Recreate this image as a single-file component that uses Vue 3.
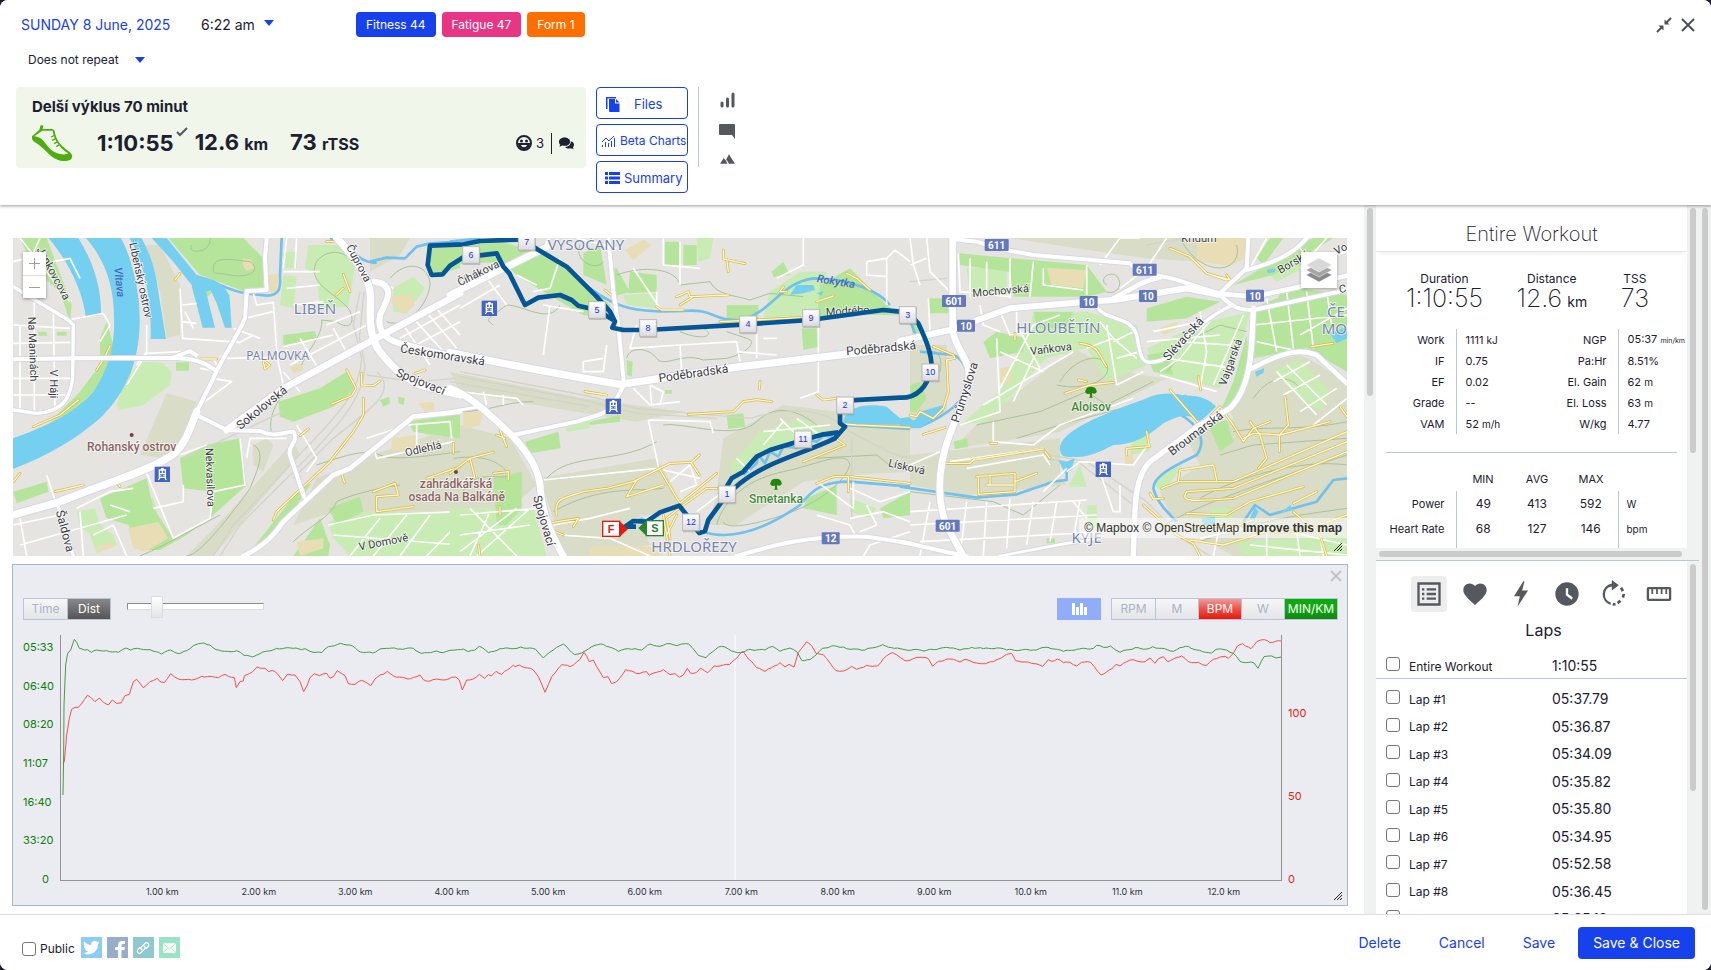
<script setup>
import { ref, computed } from 'vue'

const isPublic = ref(false)
const axis = ref('Dist')
const smoothing = ref(19)

const badges = [
  { text: 'Fitness 44', tone: 'blue' },
  { text: 'Fatigue 47', tone: 'pink' },
  { text: 'Form 1', tone: 'orange' },
]

const totals = [
  { label: 'Duration', value: '1:10:55', unit: '' },
  { label: 'Distance', value: '12.6', unit: 'km' },
  { label: 'TSS', value: '73', unit: '' },
]

const metrics = [
  ['Work', '1111', 'kJ', 'NGP', '05:37', 'min/km'],
  ['IF', '0.75', '', 'Pa:Hr', '8.51%', ''],
  ['EF', '0.02', '', 'El. Gain', '62', 'm'],
  ['Grade', '--', '', 'El. Loss', '63', 'm'],
  ['VAM', '52', 'm/h', 'W/kg', '4.77', ''],
]

const ranges = [
  ['Power', 49, 413, 592, 'W'],
  ['Heart Rate', 68, 127, 146, 'bpm'],
]

const laps = ref([
  { name: 'Entire Workout', time: '1:10:55', on: false },
  { name: 'Lap #1', time: '05:37.79', on: false },
  { name: 'Lap #2', time: '05:36.87', on: false },
  { name: 'Lap #3', time: '05:34.09', on: false },
  { name: 'Lap #4', time: '05:35.82', on: false },
  { name: 'Lap #5', time: '05:35.80', on: false },
  { name: 'Lap #6', time: '05:34.95', on: false },
  { name: 'Lap #7', time: '05:52.58', on: false },
  { name: 'Lap #8', time: '05:36.45', on: false },
  { name: 'Lap #9', time: '05:35.12', on: false },
])

const channels = [
  { text: 'RPM', tone: 'off' },
  { text: 'M', tone: 'off' },
  { text: 'BPM', tone: 'red' },
  { text: 'W', tone: 'off' },
  { text: 'MIN/KM', tone: 'green' },
]

const paceTicks = ['05:33', '06:40', '08:20', '11:07', '16:40', '33:20', '0']
const bpmTicks = ['100', '50', '0']
const kmTicks = ['1.00', '2.00', '3.00', '4.00', '5.00', '6.00', '7.00', '8.00', '9.00', '10.0', '11.0', '12.0']

// each trace is recorded in three chunks: x/y pairs with the chunk's own origin
const pace = [
  { dx: -183, dy: -240, p: '189,720 191,600 192,450 197,330 203,295 212,285 223,253 230,262 238,280 262,284 274,292 290,285 320,287 355,292 378,279 392,285 412,280 450,284 484,297 512,285 535,296 560,287 580,272 612,264 630,270 648,284 690,290 710,287 732,301 757,306 780,296 830,280 880,280 905,284 915,281 930,289 965,293 985,275 1022,265 1050,270 1082,291 1118,294 1135,285 1160,280 1200,282 1240,280 1265,295 1310,288 1330,293 1350,286' },
  { dx: 1167, dy: -195, p: '15,240 40,237 55,245 73,241 88,229 115,248 150,236 190,236 212,231 257,238 280,264 310,240 340,222 374,254 405,243 435,226 460,223 505,244 525,237 555,236 575,240 600,222 630,229 650,221 680,227 695,222 716,222 745,256 768,263 805,231 825,231 855,246 880,247 895,238 945,240 967,229 990,244 1020,234 1042,247 1055,271 1080,269 1117,235 1150,227 1180,231 1200,238 1245,240 1298,224 1325,233' },
  { dx: 2517, dy: -195, p: '0,236 15,239 80,241 120,235 150,234 180,240 215,232 250,236 290,234 320,240 400,240 444,232 490,244 530,238 580,235 590,226 610,232 632,228 660,247 705,233 740,237 758,230 820,244 840,233 865,229 890,240 935,249 948,238 980,240 1000,250 1020,274 1062,279 1074,295 1092,260 1115,258 1128,264 1143,261' },
]
const bpm = [
  { dx: -183, dy: -240, p: '189,625 193,620 200,540 208,490 215,463 225,457 235,457 262,421 270,425 285,440 298,429 315,445 325,450 337,435 350,445 363,444 375,422 388,418 400,380 410,373 430,398 440,390 450,380 472,370 480,380 493,383 512,356 535,372 555,374 575,375 605,364 655,368 675,358 695,367 703,368 709,398 720,380 730,378 733,362 748,356 758,350 771,336 795,340 806,350 817,346 833,357 848,377 863,357 885,360 900,380 911,410 921,392 930,368 943,356 958,362 980,355 990,370 1000,365 1012,347 1035,362 1045,386 1065,388 1085,376 1098,382 1112,392 1125,372 1140,360 1152,357 1162,349 1190,367 1232,371 1260,360 1270,374 1287,379 1310,372 1340,374' },
  { dx: 1167, dy: -195, p: '5,322 18,321 28,330 37,360 50,330 68,328 88,313 103,325 115,314 124,318 138,304 155,313 190,285 195,290 208,285 250,300 265,320 285,367 305,320 335,284 360,290 390,268 402,247 418,275 430,270 460,323 474,320 485,341 500,335 527,299 560,311 590,305 598,316 640,299 660,314 675,311 688,322 700,315 712,295 722,310 740,307 752,294 773,308 792,288 838,284 860,265 878,243 895,267 905,275 920,293 945,304 965,293 990,278 1005,291 1017,283 1032,291 1045,247 1055,235 1070,215 1085,227 1098,250 1120,254 1140,279 1158,302 1180,303 1205,289 1220,298 1250,286 1283,288 1300,266 1327,248' },
  { dx: 2517, dy: -195, p: '0,262 15,272 65,262 85,266 98,289 115,274 150,267 180,276 195,268 240,281 280,275 320,253 335,250 347,272 385,276 428,289 445,269 455,274 472,267 490,278 510,277 530,288 545,277 572,277 603,315 635,297 648,283 660,288 690,270 735,275 750,264 765,280 775,266 790,260 803,275 845,258 865,275 895,277 918,287 940,268 975,259 985,265 1000,250 1012,228 1028,221 1053,236 1070,215 1093,209 1110,218 1143,213' },
]

function trace(chunks) {
  const pts = chunks.flatMap(({ dx, dy, p }) =>
    p.split(' ').map((s) => s.split(',').map(Number)).map(([x, y]) => [x + dx, y + dy]))
  const out = []
  pts.forEach(([x, y], i) => {
    out.push(`${x},${y}`)
    const next = pts[i + 1]
    if (!next) return
    const steps = Math.floor((next[0] - x) / 8)
    for (let k = 1; k < steps; k++) {
      const t = k / steps
      const wobble = Math.sin((x + k * 8) * 1.7) * 2
      out.push(`${Math.round(x + (next[0] - x) * t)},${Math.round(y + (next[1] - y) * t + wobble)}`)
    }
  })
  return out.join(' ')
}

const paceLine = computed(() => trace(pace))
const bpmLine = computed(() => trace(bpm))

// map tiles, west to east
const tiles = [
  {
    dx: 0,
    olive: [
      'M420 690L500 505L590 530L560 640L500 700Z',
      'M880 900L950 760L1120 690L1380 600V860H1000Z',
      'M430 60L480 60L540 180V330L500 340L480 200Z',
      'M690 860L880 650L900 690L760 850L640 993H560Z',
      'M1110 39H1230L1200 90L1110 140Z',
      'M760 660L800 640L820 660L790 740L760 720Z',
    ],
    park: [
      'M505 39H730L790 100V190L735 200L600 150Z',
      'M300 820L440 760L460 850L520 940L630 880L640 800L550 790L540 700L620 660L720 640L740 780L640 870L560 930L480 975H430L385 900L320 880Z',
      'M740 993L900 790L935 775L870 870L800 960Z',
      'M835 530L960 490L1040 440L1065 490L1000 545L880 590L840 575Z',
      'M1280 60H1380V130L1290 152Z',
      'M1225 590L1380 565V640L1240 620Z',
      'M985 850L1080 815L1090 860L1010 900Z',
      'M140 39L60 39L100 130L180 200L210 290L215 240Z',
      'M320 290L340 360L335 420L280 500L220 560L150 590L240 500L300 420L300 340Z',
      'M850 330L945 318L950 340L850 365Z',
      'M528 412H567V437H528Z',
      'M275 39H300V50H275Z',
      'M40 800L140 770L145 800L50 835Z',
      'M115 320H140V332H115ZM170 320H200V332H170Z',
      'M880 993L960 880L990 960L985 993Z',
      'M1140 525L1168 515L1170 535L1150 545Z',
      'M1195 515L1215 520L1210 540L1195 535Z',
      'M575 185L610 190L620 170L690 210L680 240L640 200L590 240Z',
    ],
    light: [
      'M350 540L380 450L430 410L490 415L515 440L510 480L430 540L360 555Z',
      'M925 60H1030L1065 120L1045 245L960 250L950 150L915 130Z',
      'M1180 190L1240 155L1275 190L1220 265L1180 260Z',
      'M380 840L460 820L475 880L400 895Z',
      'M985 890L1100 860H1380V993H1050L1000 940Z',
      'M850 80H890V130H850ZM850 150L890 155L880 250L840 240Z',
      'M230 860L285 850L300 900L340 930L350 960L290 985L270 930L240 900Z',
      'M1270 600L1345 590L1350 625L1275 630Z',
      'M560 39H690L700 110L620 130Z',
      'M960 500L1060 480L1050 510L980 550Z',
    ],
    sand: [
      'M385 910L475 890L505 940L435 980L400 970Z',
      'M1175 640L1250 630V670L1175 678Z',
      'M1175 215L1230 205L1245 240L1210 268L1175 235Z',
      'M803 150L835 148L830 205L805 200Z',
      'M728 100L755 105L762 130L740 138L728 120Z',
      'M870 425L905 415L910 435L880 445Z',
      'M890 950L970 940L970 970L900 993Z',
      'M1255 535L1300 530L1305 555L1275 560Z',
      'M290 965L330 950L345 965L300 980Z',
    ],
    water: [
      'M258 39C310 100 340 170 342 270C345 340 335 420 280 500C220 570 120 610 39 640V732C150 690 230 640 300 580C370 510 410 430 418 320C425 220 400 110 363 39Z',
      'M145 39H235C280 110 305 190 303 270L257 275C250 200 200 100 145 39Z',
      'M388 39H425C450 90 462 120 470 170L498 342H452C455 250 440 120 388 39Z',
      'M455 39H500L590 150L640 165C670 180 690 200 690 230L695 308H675L650 235L632 195L618 200L645 308H608L575 180L520 110Z',
    ],
    stream: [
      'M590 155C650 170 690 200 740 205L800 212C840 210 842 190 840 150L845 39',
      'M1110 110L1160 98L1215 100L1250 65L1290 55L1380 50',
      'M990 39C1050 60 1080 120 1130 112',
    ],
    contour: [
      'M640 130C640 90 700 105 750 110C790 140 740 160 690 150S640 150 640 130',
      'M575 60C560 90 620 80 625 60C640 40 620 70 632 39',
      'M1065 120C1030 60 960 80 945 120C930 180 1000 200 1045 250C1070 290 1050 320 1010 290L965 285C970 330 920 380 905 420',
      'M760 660C800 680 770 740 750 790C700 860 600 993 560 993',
      'M1170 160C1220 100 1290 120 1290 180C1280 260 1200 310 1160 290',
      'M820 640C800 600 820 540 850 510',
      'M950 720C1040 690 1100 670 1140 690S1300 690 1380 680',
      'M880 950C930 900 990 880 1010 830C1050 810 1130 790 1200 780',
      'M420 993C500 960 600 900 660 870',
    ],
    minor: [
      'M39 300L210 310M39 355L218 352M60 300V560M103 200V560M160 260L165 560M39 460H218M39 510H215M60 39L210 230M39 110L120 90M120 39L80 130M160 110L210 100L240 160M205 285L310 265L330 300L300 350',
      'M540 190L548 340L720 352L760 330M548 240L590 235M545 290L590 295M555 260L580 310',
      'M700 310L780 340M760 205L770 240L820 232L832 400L850 480M735 280L820 260M860 39L850 130M890 39L885 130M850 140H960M860 190L960 180M880 240L970 230',
      'M640 460L695 470L600 540M600 430L660 440L640 400M440 300V380L410 420M380 480L440 385L580 378L590 400',
      'M680 400L830 396M700 350L660 400M850 365L1000 330M900 500L850 440M960 440L930 390L900 340M1000 310L1050 400M980 300L1080 260M870 420L1100 300',
      'M140 750L220 993M230 850L330 800L400 790M280 930L340 900L380 993M330 840L390 860M250 993L240 860M440 745L520 940L630 880L640 800L735 780L720 640M540 690L620 660M460 850L550 830L550 780',
      'M60 960L380 870M39 900L180 870M80 993L60 880',
      'M1180 190L1100 160M1210 300L1290 420M1240 280L1340 390M1270 250L1370 370M1300 240L1380 330M1200 340L1380 240M1230 370L1380 290',
      'M1100 640L1220 600L1350 590L1355 640M1130 700L1360 650M1130 700L1120 660M1250 600V690',
      'M985 900L1120 870L1380 860M1050 993L1140 880M1120 993L1220 870M1200 993L1290 870M1000 930L1380 960M1280 993L1380 890',
      'M890 600L950 700L920 740M740 700L750 640L860 640',
    ],
    rail: [
      'M1080 200L1060 300L1085 400C1080 520 980 600 870 720L700 900L640 993',
      'M1092 200L1078 340L1095 420C1095 520 1000 620 890 730L720 900L660 993',
      'M1130 440C1200 500 1100 560 1000 640L880 760',
      'M1100 450L1240 470L1380 460',
      'M550 700L850 560',
    ],
    road: [
      ['M39 403L220 400L520 398C580 400 610 410 645 435M520 398L570 378L588 390', 12],
      ['M800 39L795 100L800 195L740 198L735 280C710 340 660 410 640 460L590 560', 12],
      ['M590 560C570 610 550 680 500 700C440 740 300 780 180 830L39 870', 22],
      ['M590 570L680 615L780 618C830 640 850 620 880 620C900 650 860 660 870 690L912 815', 12],
      ['M680 615L850 490L1100 355L1380 205', 20],
      ['M1010 39C1050 80 1110 150 1112 220C1108 290 1110 340 1140 380C1180 430 1200 450 1260 480L1380 510', 22],
      ['M1125 170C1190 180 1160 230 1140 270C1130 320 1160 345 1200 355L1380 400', 18],
      ['M730 993C800 960 830 920 850 890L1000 750L1050 730L1240 575L1380 560', 14],
      ['M39 185L130 240L205 285L220 300L218 460C210 520 190 560 110 565L39 555', 10],
      ['M170 830L220 993', 10],
    ],
    trail: [
      'M100 605L180 570L235 525', 'M330 362L315 395L290 435', 'M600 402H650', 'M165 800L250 780',
      'M820 885L830 860L990 710L1060 620L1090 570V520', 'M1040 435L1068 490L1055 512L995 537',
      'M1085 445V480L1120 482L1140 468', 'M1030 148L1050 200M980 50H1005M1030 190L1008 210', 'M525 165L540 145M790 405L810 420L795 432L790 410',
      'M1120 800L1185 775L1195 810L1130 815L1130 860L1240 845', 'M1280 760L1380 725', 'M40 770L60 745M350 770L360 785',
      'M1025 745L1033 772M1245 445L1275 435', 'M900 632L925 612M1360 655V685',
    ],
    labels: [
      ['Vltava', 358, 172, 84, 'river'], ['Libeňský ostrov', 422, 165, 78, 's33'], ['Jankovcova', 160, 145, 62, 's33'],
      ['Na Maninách', 98, 372, 88, 's33'], ['V Háji', 160, 477, 90, 's33'], ['LIBEŇ', 945, 248, 0, 'district big'],
      ['PALMOVKA', 833, 392, 0, 'district'], ['Čuprova', 1076, 115, 62, 's33'], ['Sokolovská', 785, 548, -39, 's36'],
      ['Rohanský ostrov', 395, 665, 0, 'place'], ['Nekvasilova', 630, 757, 88, 's33'], ['Šaldova', 195, 918, 75, 's36'],
      ['Spojovací', 1262, 470, 22, 's36'], ['Českomoravská', 1328, 390, 9, 's36'], ['Odlehlá', 1270, 672, -13, 's33'],
      ['zahrádkářská', 1368, 777, 0, 'place'], ['osada Na Balkáně', 1370, 816, 0, 'place'], ['V Domově', 1150, 952, -11, 's33'],
    ],
    dots: [[395, 630], [1368, 741]],
    trains: [[487, 748]],
    trees: [],
    shields: [],
  },
  {
    dx: 1350,
    olive: [
      'M820 640L1000 540L1160 560L1380 600V740L1200 750L1060 770L860 900H780L800 800Z',
      'M270 760L620 700L700 840L600 870L310 880Z',
      'M30 600L180 640L260 780L180 850L30 850Z',
      'M310 880L560 850L600 960L420 993H330Z',
      'M0 440L400 520L700 560L560 590L200 530L30 500Z',
    ],
    park: [
      'M0 60L150 50L260 80L360 130L480 240V280L400 270L280 200L200 150L160 110L0 120Z',
      'M540 140L620 150V200L535 205Z', 'M645 50H690V120H645ZM700 60H740V120H700Z',
      'M830 240H925V290H830Z', 'M1055 310H1100L1105 365L1060 375Z',
      'M225 650L325 620L332 670L240 685Z', 'M130 760L215 740V850L170 900H140Z',
      'M830 570L880 565L885 605L835 612Z', 'M1070 820L1160 780V870L1060 850Z',
      'M420 590L510 570V590L420 600Z', 'M530 405L548 410L545 455L532 450Z',
      'M1110 180L1200 130L1310 240L1350 270L1200 270L1100 285Z', 'M645 495H665V506H645Z',
      'M480 130L500 130L540 200L490 215Z', 'M400 85L450 60L470 180L400 150Z', 'M965 140L1000 110L1020 150L970 155Z',
      'M1290 850L1380 800V870L1300 880Z',
    ],
    light: [
      'M840 720L930 620L1060 580L1140 620L940 690L850 770Z',
      'M0 850H250L290 993H0Z', 'M960 200L1050 140L1130 140L1100 280L940 280Z',
      'M340 590L420 580V610L350 620Z', 'M740 39H790L780 100L745 110Z', 'M520 210L620 205V250L530 240Z',
      'M1200 820L1280 850L1260 880L1200 860Z',
    ],
    sand: [
      'M525 75L580 45L605 60L550 105Z', 'M40 560L100 560L90 600L40 615Z', 'M420 965H600L640 993H420Z',
    ],
    water: [
      'M1180 590C1190 540 1260 535 1310 545L1350 580L1420 570L1410 600L1180 598Z',
      'M1020 210L1040 180L1090 180L1095 195L1060 205Z', 'M1100 205L1120 198L1115 212Z',
      'M560 885L575 876L588 885L580 895H562Z',
    ],
    stream: [
      'M420 190C500 250 560 265 700 258C800 250 780 290 880 285C960 260 1000 170 1090 160C1200 160 1290 200 1320 240',
      'M760 920C850 950 950 910 1050 840C1090 790 1120 770 1200 770L1380 785',
      'M880 750L920 715L925 690L945 715L960 680L985 695L1000 665L1040 668L1060 640L1100 650L1120 632L1150 635',
      'M1180 600L1380 612', 'M0 50L90 40',
    ],
    contour: [
      'M330 240C300 300 220 240 170 240C120 280 100 280 130 300', 'M500 150C580 120 680 130 690 180L780 170C800 210 850 210 900 225L960 205L1060 215',
      'M530 400C540 360 600 370 620 400S700 380 760 405L830 400C880 390 930 350 890 340L830 320',
      'M690 320C760 350 800 330 760 310', 'M800 900C820 820 900 760 1000 740S1190 670 1200 720C1170 800 1060 850 1000 870S830 920 820 890',
      'M1090 700L1280 690L1330 730', 'M640 600C700 590 860 650 920 590S1050 560 1100 600', 'M290 760C360 680 500 720 620 650',
      'M310 860C450 780 560 800 640 790', 'M10 700C80 690 140 700 170 740S60 720 40 800', 'M390 60C370 110 440 140 460 110',
      'M30 560C120 560 160 530 250 530',
    ],
    minor: [
      'M270 80L300 39M150 180L30 250M110 160L170 240M200 150L260 180M250 200L300 190L330 100M380 39L500 70M300 240L280 390M280 240L400 260',
      'M550 130L630 250M620 200V250M640 39V120L750 130M690 50V180M560 300L540 370L690 360L860 350M690 360L695 440M470 360L460 440L400 440V410L460 400',
      'M860 350L870 410M920 320V400M860 380L980 390M940 340H980M1105 300V500L1050 520M1250 110L1310 100L1335 75L1380 110M1250 110V150L1310 155M1310 100V240M1060 39V120L980 160',
      'M595 585L780 590L790 625M595 585L625 725L690 830M280 765L620 730M550 490L600 540L690 530M600 480L605 540M580 470L640 500L630 540',
      'M1380 800L1290 830L1200 790M1200 880L1300 860L1380 890M1250 840L1280 900L1230 920M1100 870L1200 900L1220 940',
      'M30 870L260 850M30 930L240 900M30 980L200 850M80 993L240 850M60 850L200 993M120 860L60 993',
      'M30 500L200 520L220 540M100 500L110 540M160 510V540',
      'M310 900L420 880L540 850M330 930L480 940L600 993M660 770L720 720L740 780L690 800M740 860L820 800',
      'M940 620L1140 600M990 580L1050 640M1040 580L1110 630M940 660L1000 590M860 700L900 740M1380 920L1260 960L1240 993',
      'M750 760L640 735M1100 770L1210 850V770',
    ],
    rail: [
      'M30 440L400 510L560 550L900 580C1000 550 1120 540 1200 620C1280 660 1320 690 1380 700',
      'M30 455L400 525L560 565L800 580', 'M1205 640V880', 'M0 470L420 545',
    ],
    road: [
      ['M0 210L290 66', 20],
      ['M0 383C180 420 340 450 510 478L870 425L1380 365', 22],
      ['M475 39L490 200L505 300L522 480L500 520C480 570 440 570 380 590L190 630', 12],
      ['M0 490C60 510 120 570 190 635C240 690 270 740 272 800C280 880 310 940 340 993', 20],
      ['M860 993C970 960 1080 930 1250 935L1380 955', 12],
      ['M0 560L90 545', 8],
    ],
    trail: [
      'M715 568L850 560L880 530L920 524L965 530', 'M930 470L928 492', 'M1100 510L1120 525L1160 520', 'M820 75V102L885 116M830 102L835 140',
      'M620 245L635 255H700M680 215L715 200L720 215L835 210M725 218L690 240', 'M1100 230L1150 213M1190 145L1220 160L1260 195',
      'M320 870C310 820 340 820 400 800L470 790L550 770L660 715L725 712M630 735L690 835L800 745M560 765L530 815L640 780M725 712L748 690M725 715L748 750',
      'M700 840L650 880L660 940M640 870L660 993M680 870L650 930', 'M1060 710L1185 660L1155 640M1100 775L1150 755H1195V800M1200 755L1380 775',
      'M1180 597L1220 600L1380 607', 'M0 745L60 700L130 682M60 700L75 760M130 745L175 740V765', 'M150 615L170 665M140 630L165 640',
      'M290 895L385 880L370 905M290 910L340 930', 'M405 500L470 510M465 195L485 212M1000 185L990 200H1010', 'M150 845V870M85 960L90 993M810 290L1050 278',
      'M700 840L770 790L800 790',
    ],
    labels: [
      ['VYSOČANY', 408, 56, 0, 'district big'], ['Čihákova', 85, 145, -26, 's33'], ['Poděbradská', 730, 445, -8, 's36'],
      ['Poděbradská', 1293, 370, -5, 's36'], ['Rokytka', 1158, 170, 9, 'river'], ['Modrého', 1193, 258, -3, 's33'],
      ['Spojovací', 282, 887, 74, 's36'], ['Smetanka', 978, 823, 0, 'nature'], ['HRDLOŘEZY', 732, 963, 0, 'district big'],
      ['Lísková', 1370, 726, 13, 's33'],
    ],
    dots: [],
    trains: [[118, 250], [490, 544]],
    trees: [[978, 776]],
    shields: [['12', 1142, 940]],
  },
  {
    dx: 2700,
    olive: [
      'M230 600L520 370L620 420L720 450L800 460L480 620L300 650L160 670Z',
      'M860 640L1050 560H1341V993H1000L820 890L780 800L900 720Z',
      'M30 690L120 680L480 640L480 760L500 780L200 810L30 780Z',
      'M330 39H900L890 110L740 100L600 80Z', 'M30 360H140V560L60 600L30 580Z', 'M1060 420L1200 390L1260 420L1341 480V600H1010L990 560Z',
    ],
    park: [
      'M175 85L560 120L620 200L560 215L340 215L330 140L180 120Z', 'M740 390L800 380L820 450L760 440Z',
      'M1000 470L1040 330L1050 430L1010 530L960 560Z', 'M1060 250L1200 190L1341 210V440L1220 370L1060 400Z',
      'M1000 180L1200 60L1240 39H1300L1120 150Z', 'M925 600L980 585L1000 650L960 680Z', 'M85 220H160V265H85Z',
      'M160 650L200 640L205 665L165 672Z', 'M30 480L60 470L80 520L50 560L30 560Z', 'M740 250L860 215L960 230L860 280L740 290Z',
      'M400 260H520L500 310H410Z', 'M1070 100L1110 39H1150L1090 120Z', 'M440 940H465V955H440Z', 'M1140 200L1180 190L1160 240H1130Z',
      'M30 270L50 290L60 330L40 340Z', 'M250 350L290 320L380 340L370 380L270 400Z',
    ],
    light: [
      'M300 500L400 270L560 260L710 300L740 420L620 470L560 370L440 400L260 590L180 600L250 540Z',
      'M740 370L920 290L1050 260L1030 340L960 490L780 450Z', 'M505 785L540 720L560 785Z', 'M560 840H590V890L620 910H565Z',
      'M1120 440L1200 400L1290 500L1260 560L1180 500Z', 'M200 130L320 125V210L210 215Z', 'M760 780L800 740L850 720L790 800Z',
      'M1010 950L1341 930V993H1030Z', 'M700 630L750 620L745 680L690 690Z', 'M930 850L1000 850L1000 880L930 890Z',
      'M1110 150L1200 100L1230 120L1130 170Z',
    ],
    sand: [
      'M890 39H1035V100L990 122L895 110Z', 'M440 128L558 135L550 190L455 180Z', 'M300 430L335 425V470L300 475Z',
      'M780 310L830 290L835 310L790 330Z', 'M675 690L700 685V720H675Z',
    ],
    water: [
      'M480 670C480 620 600 570 740 520C780 500 830 505 850 512C900 510 930 525 948 545L900 590C860 560 830 575 790 595C750 630 700 660 640 660C600 680 560 700 520 695C490 700 480 690 480 670Z',
      'M475 705L500 710L524 700L515 735L495 745Z', 'M0 590L45 585L60 560L130 540V560L60 610H0Z',
      'M1290 325L1341 305V340L1310 355Z', 'M1065 440L1092 430V442L1070 455Z', 'M1100 135L1125 130V140L1105 145Z',
      'M1050 880L1065 845L1075 860L1060 890Z', 'M1140 865L1170 840L1180 855ZM905 880L945 876V900L910 905Z',
    ],
    stream: [
      'M835 565C900 600 920 650 890 690C830 720 760 750 760 790C770 830 800 860 830 890', 'M0 785L230 818L350 808L460 770L500 765V740',
      'M60 380L160 390C190 400 205 440 203 480C190 540 120 580 60 605', 'M1030 890L1065 840L1110 870L1180 850L1250 830L1300 765L1341 760', 'M30 285L50 340',
    ],
    contour: [
      'M230 600L420 560L560 500L620 540L760 470M480 470C520 400 600 380 620 420S560 500 470 480', 'M800 440L900 330L960 300L1040 320',
      'M620 180C590 160 640 130 655 160S640 210 620 200', 'M840 39C900 160 1030 150 1010 60', 'M760 920C850 860 1000 800 1341 690', 'M900 820C1000 760 1200 700 1341 720',
      'M1000 620C1100 600 1200 620 1341 590', 'M960 690L1060 660L1341 640', 'M30 800L280 830L370 870L480 780', 'M80 390C110 360 130 400 120 440',
      'M1060 520C1100 460 1160 440 1200 490', 'M900 950C1100 880 1200 870 1341 850', 'M350 640L480 600L700 540L860 510',
    ],
    minor: [
      'M175 85L180 200L330 215M210 100V215M260 110V215M330 100V220M400 110L390 215M560 120L560 210M430 130V180L550 195',
      'M240 240L250 300L300 320M300 260L330 330L400 320M350 240L350 330M300 490L400 300L480 270M250 540L520 380M300 380L430 440M350 300L420 430M400 400L340 530M290 340L300 560L180 600',
      'M560 370L640 340L710 400M620 300L650 480L730 440M600 290L640 340M700 320L640 350M650 400L720 380',
      'M740 350L960 330M760 320L900 290M780 450L950 500M800 400L1000 430M830 350L990 360M900 260L920 380L900 490M960 250L840 400L780 440M1030 270L940 480',
      'M1060 300L1341 270M1070 350L1200 380M1100 220L1130 380M1160 200L1180 370M1220 200L1240 370M1280 200L1300 330M1341 250L1200 330',
      'M1100 39L1050 130M1190 60L1240 110L1341 80M1280 39L1200 130M660 190L740 130L800 39M600 120L660 39L720 39',
      'M30 39L40 120L60 180M80 39L90 140L150 200M85 220L90 320M30 120L80 100',
      'M200 830L180 993M260 830L250 993M330 820L320 970M400 830L380 960M470 830L450 950M540 825L520 940M30 860L560 825M30 900L590 870M60 950L620 920M90 830L60 993M520 830L560 880',
      'M280 590V650L400 660L480 600L700 520M500 740L540 710L700 720L750 650M590 710L640 860L660 860V780M500 730L430 800',
      'M1130 440L1250 570M1160 420L1280 540M1120 470L1230 410M1150 510L1260 450M1200 560L1310 490M1240 600L1341 520',
      'M900 940L1080 900L1341 960M940 993L960 900M1100 993V900M1200 993L1190 920M1270 993L1260 930M1050 960L1341 990',
      'M150 710L430 670M200 730L430 690L450 720M120 680L30 720',
    ],
    rail: [
      'M450 690L560 710L740 830L860 950L930 993', 'M430 700L540 715L700 840', 'M740 60L860 39M30 170L140 160',
    ],
    road: [
      ['M640 220C700 190 730 165 780 158', 14],
      ['M160 42L230 50L300 72L400 90L690 115L720 145C820 150 890 190 960 205', 12],
      ['M158 39V320C170 370 200 400 205 430C215 480 170 570 145 640C110 740 110 850 150 920L190 993', 20],
      ['M0 348L150 315L330 250L560 230L640 225L860 190L960 210', 18],
      ['M960 205L1040 130L1045 39', 12],
      ['M1040 135C1100 120 1180 90 1220 39', 12],
      ['M950 205L1060 215L1180 190L1341 152', 14],
      ['M960 210C1000 250 1020 255 1060 255L1341 195', 12],
      ['M1060 250C1055 350 1060 480 990 550L900 600L750 710C700 760 705 850 700 993', 16],
      ['M1055 430C1150 380 1200 370 1250 390L1341 475', 14],
      ['M590 245C620 290 690 270 710 330C720 380 720 410 750 412C800 410 830 380 860 340C900 300 950 260 1000 240', 10],
      ['M0 950C60 960 120 980 200 993', 12],
      ['M300 993L500 955L600 940', 8],
    ],
    trail: [
      'M810 495L905 605M905 600L960 545L1000 600L1030 650L1060 610L1110 590M1050 590L1080 630L1100 700L1075 730',
      'M1155 515L1165 600L1138 630V680M1030 640L1060 625L1140 630L1290 590', 'M785 790L835 770H940L1000 770L1341 620M835 770L840 735L940 720L950 765',
      'M1341 650L1000 790L860 800C840 830 870 830 1000 820L1341 680', 'M860 865L980 870L1050 830L1210 785', 'M870 945L970 960L1100 920L1200 920L1341 870M900 905L1000 905L1060 885',
      'M730 840L830 930L880 955L900 993', 'M1180 860L1260 930L1280 993M1250 800L1180 835', 'M140 715H210L220 705L430 672M70 628L135 608',
      'M230 755L345 745V800L235 808V755M260 780H340M270 750V780M345 770L410 745', 'M435 680L450 700M270 655H290', 'M540 355C600 360 600 400 620 425M495 505L570 480L640 472M535 465L560 470',
      'M810 70L870 95L920 145L990 165L980 150M920 145L980 165', 'M895 455L902 495M345 325V345', 'M100 365L160 390L165 400L140 405L145 500L130 550L100 580L60 560L50 575L30 570',
      'M1235 365L1298 355M740 620L748 665L680 670V690', 'M750 805L760 822L790 820M1320 545L1341 575',
    ],
    labels: [
      ['Mochovská', 302, 198, -5, 's33'], ['HLOUBĚTÍN', 475, 305, 0, 'district big'], ['Vaňkova', 453, 372, -7, 's33'],
      ['Slévačská', 850, 342, -48, 's36'], ['Vajgarská', 992, 412, -70, 's33'], ['Průmyslova', 194, 502, -72, 's36'],
      ['Aloisov', 573, 547, 0, 'nature'], ['Broumarská', 887, 625, -37, 's36'], ['KYJE', 560, 937, 0, 'district big'],
      ['Borská', 1180, 112, -30, 's33'], ['Vo', 1322, 72, -26, 's33'], ['ČE', 1308, 258, 0, 'district big'],
      ['MO', 1303, 310, 0, 'district big'], ['Křídum', 897, 41, 0, 's33'], ['C', 1328, 192, -8, 's33'],
    ],
    dots: [],
    trains: [[610, 733]],
    trees: [[573, 500]],
    shields: [['611', 290, 60], ['611', 734, 134], ['601', 162, 228], ['10', 198, 302], ['10', 566, 231], ['10', 744, 213], ['10', 1065, 212], ['601', 143, 902]],
  },
]

const splits = [
  [7, 230, 50], [6, 63, 90], [5, 441, 255], [8, 594, 309], [4, 894, 298], [9, 1083, 279], [3, 1373, 270],
  [10, 1441, 442], [2, 1185, 541], [11, 1059, 643], [1, 831, 808], [12, 723, 892],
]

const lapIcons = [
  { name: 'Laps', on: true, d: 'M2 2h20v20H2zM4 4v16h16V4zM6 7h2v2H6zm4 0h8v2h-8zM6 11h2v2H6zm4 0h8v2h-8zM6 15h2v2H6zm4 0h8v2h-8z' },
  { name: 'Heart rate', d: 'M12 21.4l-1.5-1.3C5.400 15.400 2 12.300 2 8.500 2 5.400 4.400 3 7.500 3c1.700 0 3.400.8 4.500 2.100C13.100 3.800 14.800 3 16.500 3 19.600 3 22 5.400 22 8.500c0 3.800-3.400 6.900-8.500 11.500z' },
  { name: 'Power', d: 'M14 1L6 14h5l-2 9 9-14h-5l2-8z' },
  { name: 'Pace', d: 'M12 2a10 10 0 100 20 10 10 0 000-20zM11 7h2v5l4 3-1 2-5-4z' },
  { name: 'Cadence', d: 'M11 3V0l6 4.500L11 9V5.500a7 7 0 00-1 13.600v2.400A9.500 9.500 0 0111 3zM18 7l2-1 1.500 3-2.300 1zM20 12h2.400l-.8 3.500-2.200-.8zM17.500 17l1.800 1.600-2.800 2.200-1.200-2zM12 19.700h2l.4 2.200-2.900.2z' },
  { name: 'Distance', d: 'M3 6h18a1.500 1.500 0 011.500 1.500v9A1.500 1.500 0 0121 18H3a1.500 1.500 0 01-1.500-1.500v-9A1.500 1.500 0 013 6zM3.500 8v8h17V8H19v4h-1.500V8H15v4h-1.500V8H11v4H9.500V8H7v4H5.500V8z' },
]
</script>

<template>
  <div class="workout">
    <header class="head">
      <div class="head__top">
        <a class="head__date" href="#">SUNDAY 8 June, 2025</a>
        <button class="head__time">6:22 am <i class="caret"></i></button>
        <div class="badges">
          <span v-for="b in badges" :key="b.text" class="badge" :class="`badge--${b.tone}`">{{ b.text }}</span>
        </div>
        <div class="head__win">
          <button aria-label="Collapse">
            <svg viewBox="0 0 16 16" width="16" height="16" fill="none" stroke="#4c505b" stroke-width="2">
              <path d="M1 15l5-5M15 1l-5 5" />
              <path d="M2.500 8.500h5v5zM8.500 2.500v5h5z" fill="#4c505b" stroke="none" />
            </svg>
          </button>
          <button aria-label="Close">
            <svg viewBox="0 0 16 16" width="16" height="16" fill="none" stroke="#4c505b" stroke-width="2"><path d="M2 2l12 12M14 2L2 14" /></svg>
          </button>
        </div>
      </div>
      <button class="head__repeat">Does not repeat <i class="caret"></i></button>

      <div class="head__main">
        <section class="card">
          <h1 class="card__title">Delší výklus 70 minut</h1>
          <div class="card__row">
            <svg class="card__shoe" viewBox="0 0 120 108" width="40" height="36">
              <path
                fill="#4fae0d" fill-rule="evenodd"
                d="M0 34L22 14 26 0l8 2-2 10h30l6 5c2 25 18 45 44 63 12 9 10 22 0 26-16 5-36 1-52-11C44 82 30 64 8 51-1 45 0 40 0 34zM7 34c14 1 24 8 34 22 10 13 22 26 40 30 12 3 22 3 28-1C84 70 66 46 62 17H31z"
              />
              <path d="M57 36l13-6M60 46l13-6M66 56l12-6M73 65l10-7" stroke="#4fae0d" stroke-width="4" />
            </svg>
            <strong class="card__stat card__stat--time">1:10:55</strong>
            <svg class="card__check" viewBox="0 0 12 10" width="12" height="10" fill="none" stroke="#4a5a68" stroke-width="2"><path d="M1 5l3 3 7-7" /></svg>
            <strong class="card__stat card__stat--dist">12.6 <small>km</small></strong>
            <strong class="card__stat">73 <small>rTSS</small></strong>
            <span class="card__mood">
              <svg viewBox="0 0 16 16" width="16" height="16">
                <circle cx="8" cy="8" r="7" fill="none" stroke="#1c2030" stroke-width="2" />
                <circle cx="5.500" cy="6" r="1.500" fill="#1c2030" /><circle cx="10.500" cy="6" r="1.500" fill="#1c2030" />
                <path d="M2 8h12c0 8-12 8-12 0z" fill="#1c2030" /><path d="M5 10h6c-1 3-5 3-6 0z" fill="#f0f6ea" />
              </svg>
              3
            </span>
            <span class="card__talk">
              <svg viewBox="0 0 16 13" width="15" height="13" fill="#1c2030">
                <path d="M6 0c3.300 0 5.800 1.900 5.800 4.500S9.300 9 6 9c-.9 0-1.700-.1-2.500-.4L.5 10l.8-2.300C.5 6.900 0 5.800 0 4.500 0 1.900 2.700 0 6 0z" />
                <path d="M12.700 4c2 .6 3.300 2 3.300 3.800 0 1-.4 1.900-1.100 2.600l.8 2.300-2.900-1.200c-2.300.8-5 .2-6.300-1.400 3.700 0 6.300-2.500 6.200-6.100z" />
              </svg>
            </span>
          </div>
        </section>

        <nav class="actions">
          <button class="action">
            <svg viewBox="0 0 16 16" width="16" height="16" fill="#1641ec"><path d="M1 1h10v1.500H2.500V13H1z" /><path d="M4 3h6v4.500h4.500V16H5a1 1 0 01-1-1zM11 3l3.500 3.500H11z" /></svg>
            <span>Files</span>
          </button>
          <button class="action action--wide">
            <svg viewBox="0 0 14 12" width="14" height="12" fill="none" stroke="#1641ec"><path d="M1 7l4-4 3 3 5-5M1.500 12v-2M4.500 12V7M7.500 12V8M10.500 12V6M13.500 12V3" /></svg>
            <span>Beta Charts</span>
          </button>
          <button class="action action--tight">
            <svg viewBox="0 0 15 12" width="15" height="12" fill="#1641ec"><path d="M0 0h3v3H0zm4 0h11v3H4zM0 4.500h3v3H0zm4 0h11v3H4zM0 9h3v3H0zm4 0h11v3H4z" /></svg>
            <span>Summary</span>
          </button>
        </nav>

        <div class="side">
          <button aria-label="Charts"><svg viewBox="0 0 15 16" width="15" height="16" stroke="#55585f" stroke-width="3" stroke-linecap="round"><path d="M2 14v-3M7.500 14V7M13 14V2" /></svg></button>
          <button aria-label="Comments"><svg viewBox="0 0 16 15" width="16" height="15" fill="#55585f"><path d="M1 0h14a1 1 0 011 1v14l-3-4H1a1 1 0 01-1-1V1a1 1 0 011-1z" /></svg></button>
          <button aria-label="Map"><svg viewBox="0 0 16 10" width="15" height="10" fill="#55585f"><path d="M0 10l4-6 2 2.500L9.500 0 16 10H9.500L7 5.500 6.500 7 8 10z" /></svg></button>
        </div>
      </div>
    </header>

    <main class="body">
      <div class="left">
        <section class="map">
          <svg class="map__svg" viewBox="39 39 4002 954" preserveAspectRatio="xMidYMid slice">
            <defs>
              <linearGradient id="pin" x1="0" y1="0" x2="0" y2="1"><stop offset="0" stop-color="#fff" /><stop offset="1" stop-color="#dcdcdf" /></linearGradient>
            </defs>
            <rect x="39" y="39" width="4002" height="954" fill="#e5e4e0" />
            <g v-for="t in tiles" :key="'land' + t.dx" :transform="`translate(${t.dx} 0)`">
              <path class="m-olive" :d="t.olive.join('')" />
              <path class="m-light" :d="t.light.join('')" />
              <path class="m-park" :d="t.park.join('')" />
              <path class="m-sand" :d="t.sand.join('')" />
              <path class="m-contour" :d="t.contour.join('')" />
              <path class="m-rail" :d="t.rail.join('')" />
              <path class="m-stream" :d="t.stream.join('')" />
              <path class="m-water" :d="t.water.join('')" />
              <path class="m-minor" :d="t.minor.join('')" />
            </g>
            <g v-for="t in tiles" :key="'case' + t.dx" :transform="`translate(${t.dx} 0)`">
              <path class="m-trail" :d="t.trail.join('')" />
              <path class="m-trail m-trail--in" :d="t.trail.join('')" />
              <path v-for="[d, w] in t.road" :key="d" class="m-case" :d="d" :stroke-width="w + 6" />
            </g>
            <g v-for="t in tiles" :key="'road' + t.dx" :transform="`translate(${t.dx} 0)`">
              <path v-for="[d, w] in t.road" :key="d" class="m-road" :d="d" :stroke-width="w" />
            </g>
            <g v-for="t in tiles" :key="'text' + t.dx" :transform="`translate(${t.dx} 0)`">
              <text
                v-for="([text, x, y, r, kind], i) in t.labels" :key="i" class="m-label" :class="kind"
                :transform="`translate(${x} ${y}) rotate(${r})`"
              >{{ text }}</text>
              <circle v-for="[x, y] in t.dots" :key="x" :cx="x" :cy="y" r="6" fill="#73403f" />
              <g v-for="[x, y] in t.trains" :key="x" :transform="`translate(${x} ${y})`">
                <rect x="-23" y="-23" width="46" height="46" fill="#4264c6" />
                <path d="M-9-13H9V9H-9zM-4-17H4M-9-2H9M0-13V-2M-7 9l-5 8M7 9l5 8M-6 4h3M3 4h3" fill="none" stroke="#fff" stroke-width="4" />
              </g>
              <g v-for="[x, y] in t.trees" :key="x" :transform="`translate(${x} ${y})`" fill="#23860f">
                <ellipse cx="0" cy="-6" rx="15" ry="9" /><ellipse cx="-8" cy="-1" rx="9" ry="8" /><ellipse cx="9" cy="-1" rx="8" ry="7" />
                <path d="M-3 0h6v14l3 4h-12l3-4z" />
              </g>
              <g v-for="([n, x, y], i) in t.shields" :key="i" :transform="`translate(${x} ${y})`">
                <rect :x="n.length > 2 ? -36 : -27" y="-18" :width="n.length > 2 ? 72 : 54" height="36" rx="3" fill="#6378bf" />
                <text class="m-shield" y="1">{{ n }}</text>
              </g>
            </g>

            <g transform="translate(1350 0)">
              <g class="m-route">
                <path d="M230 43L90 48L40 58L-60 62L-67 120L-55 150L-22 148L0 122L40 97L140 85L160 125L178 145L225 240L265 218L330 210L365 225L385 242L440 255L490 285" />
                <path d="M230 50L262 73L350 125L440 215L480 260L495 290L487 308L520 315H590L890 298L1080 285L1300 255L1374 262L1405 295C1425 340 1445 380 1445 430C1430 490 1400 520 1350 518L1185 527L1170 560V595L1185 605L1155 640C1050 690 950 710 870 775L830 810L775 885L765 918L748 924L722 892L710 870L688 842L630 862L590 890L550 888L525 905H558" />
                <path d="M1165 622L1120 628L1060 645L960 675L920 695L880 740L845 760L830 785" />
              </g>
              <g v-for="[n, x, y] in splits" :key="n" :transform="`translate(${x} ${y})`">
                <rect x="-24" y="-22" width="52" height="52" fill="#777" opacity=".35" />
                <rect x="-25" y="-25" width="50" height="50" fill="url(#pin)" stroke="#b9b9bd" stroke-width="3" />
                <text class="m-split">{{ n }}</text>
              </g>
              <path d="M509 889L534 912L509 935Z" fill="#e5190f" /><rect x="458" y="889" width="51" height="45" fill="#fff" stroke="#e5190f" stroke-width="4" />
              <text class="m-flag" x="483" y="912" fill="#e5190f">F</text>
              <path d="M589 886L565 909L589 932Z" fill="#2c822c" /><rect x="589" y="887" width="51" height="45" fill="#fff" stroke="#2c822c" stroke-width="4" />
              <text class="m-flag" x="615" y="910" fill="#2c822c">S</text>
            </g>
          </svg>

          <div class="map__zoom">
            <button aria-label="Zoom in"><svg viewBox="0 0 11 11" width="11" height="11" stroke="#a0a0a0"><path d="M0 5.500h11M5.500 0v11" /></svg></button>
            <button aria-label="Zoom out"><svg viewBox="0 0 11 11" width="11" height="11" stroke="#a0a0a0"><path d="M0 5.500h11" /></svg></button>
          </div>
          <button class="map__layers" aria-label="Layers">
            <svg viewBox="0 0 26 26" width="26" height="26" stroke="#fff" stroke-width=".5">
              <path d="M0 18l13-7 13 7-13 7z" fill="#8a8a8a" /><path d="M0 13l13-7 13 7-13 7z" fill="#a5a5a5" /><path d="M0 8l13-7 13 7-13 7z" fill="#d8d8d8" />
            </svg>
          </button>
          <p class="map__credit">
            <a href="#">© Mapbox</a> <a href="#">© OpenStreetMap</a> <a href="#"><b>Improve this map</b></a>
          </p>
          <svg class="grip" viewBox="0 0 8 8" width="8" height="8" stroke="#222"><path d="M0 8l8-8M3 8l5-5M6 8l2-2" /></svg>
        </section>

        <section class="chart">
          <button class="chart__close" aria-label="Close chart"><svg viewBox="0 0 12 12" width="12" height="12" stroke="#c3c4c0" stroke-width="2"><path d="M1 1l10 10M11 1L1 11" /></svg></button>
          <div class="chart__bar">
            <div class="seg">
              <button v-for="a in ['Time', 'Dist']" :key="a" class="seg__btn" :class="{ 'seg__btn--dark': axis === a }" @click="axis = a">{{ a }}</button>
            </div>
            <input v-model="smoothing" class="slider" type="range" min="0" max="100" aria-label="Smoothing" />
            <button class="chart__hist" aria-label="Histogram">
              <svg viewBox="0 0 15 12" width="15" height="12" fill="#fff"><path d="M0 0h3v12H0zM4 4h3v8H4zM8 0h3v12H8zM12 4h3v8h-3z" /></svg>
            </button>
            <div class="seg">
              <button v-for="c in channels" :key="c.text" class="seg__btn" :class="`seg__btn--${c.tone}`">{{ c.text }}</button>
            </div>
          </div>
          <div class="chart__plot">
            <ul class="ticks ticks--pace"><li v-for="t in paceTicks" :key="t">{{ t }}</li></ul>
            <svg class="chart__svg" viewBox="0 0 3660 735" preserveAspectRatio="none">
              <path d="M2022 0V735" stroke="#fff" />
              <polyline :points="bpmLine" stroke="#f4514c" />
              <polyline :points="paceLine" stroke="#4a9a4a" />
            </svg>
            <ul class="ticks ticks--bpm"><li v-for="t in bpmTicks" :key="t">{{ t }}</li></ul>
          </div>
          <ul class="chart__km"><li v-for="k in kmTicks" :key="k">{{ k }} km</li></ul>
          <svg class="grip" viewBox="0 0 8 8" width="8" height="8" stroke="#222"><path d="M0 8l8-8M3 8l5-5M6 8l2-2" /></svg>
        </section>
      </div>

      <aside class="right">
        <div class="rail rail--left"><i></i></div>
        <div class="panels">
          <section class="panel panel--stats">
            <div class="panel__in">
              <h2 class="panel__title">Entire Workout</h2>
              <dl class="totals">
                <div v-for="t in totals" :key="t.label">
                  <dt>{{ t.label }}</dt>
                  <dd>{{ t.value }}<small v-if="t.unit">{{ t.unit }}</small></dd>
                </div>
              </dl>
              <table class="metrics">
                <colgroup><col class="c80" /><col /><col class="c80" /><col class="c68" /></colgroup>
                <tbody>
                  <tr v-for="m in metrics" :key="m[0]">
                    <th scope="row">{{ m[0] }}</th>
                    <td>{{ m[1] }} <small>{{ m[2] }}</small></td>
                    <th scope="row">{{ m[3] }}</th>
                    <td>{{ m[4] }} <small :class="{ tiny: m[5] === 'min/km' }">{{ m[5] }}</small></td>
                  </tr>
                </tbody>
              </table>
              <hr />
              <table class="ranges">
                <colgroup><col class="c80" /><col /><col /><col /><col class="c68" /></colgroup>
                <thead><tr><td></td><th scope="col">MIN</th><th scope="col">AVG</th><th scope="col">MAX</th><td></td></tr></thead>
                <tbody>
                  <tr v-for="r in ranges" :key="r[0]">
                    <th scope="row">{{ r[0] }}</th>
                    <td>{{ r[1] }}</td><td>{{ r[2] }}</td><td>{{ r[3] }}</td>
                    <td class="unit">{{ r[4] }}</td>
                  </tr>
                </tbody>
              </table>
            </div>
            <div class="rail rail--stats"><i></i></div>
          </section>
          <div class="hrail"><i></i></div>
          <section class="panel panel--laps">
            <div class="panel__in">
              <div class="tabs">
                <button v-for="i in lapIcons" :key="i.name" class="tab" :class="{ 'tab--on': i.on }" :aria-label="i.name">
                  <svg viewBox="0 0 24 24" width="28" height="28" fill="#55585f"><path :d="i.d" fill-rule="evenodd" /></svg>
                </button>
              </div>
              <h2 class="laps__title">Laps</h2>
              <div class="laps">
                <label v-for="l in laps" :key="l.name" class="lap">
                  <input v-model="l.on" type="checkbox" />
                  <span class="lap__name">{{ l.name }}</span>
                  <span class="lap__time">{{ l.time }}</span>
                </label>
              </div>
            </div>
            <div class="rail rail--laps"><i></i></div>
          </section>
        </div>
        <div class="rail rail--outer"><i></i></div>
      </aside>
    </main>

    <footer class="foot">
      <label class="foot__public"><input v-model="isPublic" type="checkbox" /> Public</label>
      <div class="share">
        <a href="#" class="share__tw" aria-label="Twitter">
          <svg viewBox="0 0 24 24" width="17" height="17" fill="#fff"><path d="M23.600 4.800a9.500 9.500 0 01-2.700.8 4.800 4.800 0 002-2.600 9.700 9.700 0 01-3 1.100 4.800 4.800 0 00-8.200 4.400A13.600 13.600 0 011.800 3.500a4.800 4.800 0 001.500 6.400 4.700 4.700 0 01-2.200-.6 4.800 4.800 0 003.800 4.800 4.700 4.700 0 01-2.100.1 4.800 4.800 0 004.400 3.300A9.600 9.600 0 010 19.500a13.500 13.500 0 0020.900-12c1-.8 2-1.700 2.700-2.700z" /></svg>
        </a>
        <a href="#" class="share__fb" aria-label="Facebook">
          <svg viewBox="0 0 21 21" width="21" height="21" fill="#fff"><path d="M11 21v-8H8v-3h3V8c0-3 2-4 4-4h3v3h-2c-1 0-1.500.5-1.500 1.500V10H18l-.5 3h-3v8z" /></svg>
        </a>
        <a href="#" class="share__link" aria-label="Copy link">
          <svg viewBox="0 0 16 16" width="14" height="14" fill="none" stroke="#fff" stroke-width="1.500"><path d="M7 10.500C5 9 5.500 7.500 6.500 6.500L10 3c3-2.500 6 .5 3.500 3.500L11 9M9 5.500c2 1.500 1.500 3 .5 4L6 13c-3 2.500-6-.5-3.500-3.500L5 7" /></svg>
        </a>
        <a href="#" class="share__mail" aria-label="Email">
          <svg viewBox="0 0 14 10" width="13" height="10"><path d="M0 0h14v10H0z" fill="#fff" /><path d="M0 0l7 6 7-6M0 10l5-5M14 10L9 5" fill="none" stroke="#9be3c6" /></svg>
        </a>
      </div>
      <div class="foot__actions">
        <button class="link">Delete</button>
        <button class="link">Cancel</button>
        <button class="link">Save</button>
        <button class="primary">Save &amp; Close</button>
      </div>
    </footer>
  </div>
</template>

<style>
body {
  background: #1b1c33;
}
</style>

<style scoped>
* {
  box-sizing: border-box;
}

.workout {
  display: flex;
  flex-direction: column;
  height: 100vh;
  overflow: hidden;
  border-radius: 8px;
  background: #fff;
  color: #1c2030;
  font: 12px/16px Inter, "Liberation Sans", sans-serif;
}

button {
  padding: 0;
  border: 0;
  background: none;
  color: inherit;
  font: inherit;
  cursor: pointer;
}

a {
  color: inherit;
  text-decoration: none;
}

ul, dl, dd, h1, h2, p {
  margin: 0;
  padding: 0;
  list-style: none;
}

svg {
  flex: none;
}

input[type="checkbox"] {
  appearance: none;
  flex: none;
  width: 14px;
  height: 14px;
  margin: 0;
  border: 1px solid #767676;
  border-radius: 3px;
  background: #fff;
}

input[type="checkbox"]:checked {
  background: #1641ec;
}

/* header */
.head {
  position: relative;
  z-index: 2;
  flex: none;
  padding: 12px 15px 12px 16px;
  background: #fff;
  box-shadow: 0 1px 3px rgba(0, 0, 0, 0.4);
}

.head__top {
  display: flex;
  align-items: center;
  height: 25px;
  padding-left: 5px;
  font-size: 14px;
}

.head__date {
  width: 180px;
  color: #1641ec;
}

.head__time {
  display: flex;
  gap: 9px;
  width: 155px;
  white-space: nowrap;
}

.caret {
  width: 0;
  height: 0;
  border: 5px solid transparent;
  border-top: 6px solid #1641ec;
  border-bottom: 0;
}

.head__time .caret {
  margin-top: 3px;
}

.badges {
  display: flex;
  gap: 6px;
}

.badge {
  padding: 0 10px;
  border-radius: 4px;
  color: #fff;
  font-size: 12px;
  line-height: 25px;
}

.badge--blue { background: #1641ec; }
.badge--pink { background: #e83586; }
.badge--orange { background: #ff6e00; }

.head__win {
  display: flex;
  gap: 8px;
  height: 16px;
  margin-left: auto;
}

.head__win button {
  height: 16px;
}

.head__repeat {
  display: flex;
  align-items: center;
  gap: 16px;
  margin: 15px 12px 19px;
}

.head__main {
  display: flex;
  align-items: flex-start;
}

.card {
  width: 570px;
  height: 81px;
  padding: 12px 12px 0 16px;
  border-radius: 4px;
  background: #f0f6ea;
}

.card__title {
  font-size: 15px;
  line-height: 16px;
  font-weight: 700;
}

.card__row {
  display: flex;
  align-items: center;
  height: 36px;
  margin-top: 10px;
}

.card__stat {
  font-size: 22px;
  font-weight: 700;
  white-space: nowrap;
}

.card__stat small {
  font-size: 16px;
}

.card__stat--time {
  margin-left: 25px;
}

.card__check {
  align-self: flex-start;
  margin: 2px 7px 0 2px;
}

.card__stat--dist {
  margin-right: 22px;
}

.card__mood {
  display: flex;
  align-items: center;
  gap: 4px;
  margin-left: auto;
  font-size: 13px;
}

.card__talk {
  display: flex;
  align-items: center;
  height: 21px;
  margin-left: 7px;
  padding-left: 7px;
  border-left: 1px solid #1c2030;
}

.actions {
  display: grid;
  gap: 5px;
  margin-left: 10px;
}

.action {
  display: flex;
  align-items: center;
  gap: 13px;
  width: 92px;
  height: 32px;
  padding: 1px 0 0 8px;
  border: 1px solid #1641ec;
  border-radius: 4px;
  color: #1641ec;
  font-size: 13px;
  white-space: nowrap;
}

.action--wide {
  gap: 5px;
  padding-left: 4px;
  font-size: 12px;
}

.action--tight {
  gap: 4px;
}

.side {
  display: flex;
  flex-direction: column;
  align-items: center;
  justify-content: space-between;
  height: 80px;
  margin-left: 10px;
  padding: 5px 0 3px 20px;
  border-left: 1px solid #b9c6d6;
}

.side button {
  display: flex;
}

/* body */
.body {
  display: grid;
  grid-template-columns: minmax(0, 1fr) 347px;
  flex: 1;
  min-height: 0;
  overflow: hidden;
}

.left {
  padding: 33px 16px 8px 12px;
}

.map {
  position: relative;
  height: 318px;
  margin: 0 1px 8px;
  overflow: hidden;
}

.map__svg {
  display: block;
  width: 100%;
  height: 100%;
}

.m-olive { fill: #d9dcc6; }
.m-park { fill: #b5e59b; }
.m-light { fill: #c8ecb3; }
.m-sand { fill: #e8ddb4; }
.m-water { fill: #75cff0; }

.m-stream, .m-contour, .m-rail, .m-minor, .m-trail, .m-case, .m-road, .m-route {
  fill: none;
  stroke-linejoin: round;
}

.m-stream { stroke: #72c0ec; stroke-width: 8; }
.m-contour { stroke: #a9c29b; stroke-width: 3; }
.m-rail { stroke: #d3d3c9; stroke-width: 4; }
.m-minor { stroke: #fff; stroke-width: 5; }
.m-trail { stroke: #d6b840; stroke-width: 8; stroke-linecap: round; }
.m-trail--in { stroke: #fff6d2; stroke-width: 4; }
.m-case { stroke: #d7d8e8; }
.m-road { stroke: #fff; stroke-linecap: round; }
.m-route { stroke: #045696; stroke-width: 14; }

.m-label, .m-shield, .m-split, .m-flag {
  dominant-baseline: central;
  text-anchor: middle;
}

.m-label {
  fill: #3b3b45;
  stroke: #fff;
  stroke-opacity: 0.75;
  stroke-width: 5;
  paint-order: stroke;
  font-family: Roboto, "Liberation Sans", sans-serif;
}

.s33 { font-size: 33px; }
.s36 { font-size: 36px; }
.place { fill: #8a6363; font-size: 36px; font-weight: 500; }
.nature { fill: #3f8a35; font-size: 36px; font-weight: 500; }
.river { fill: #4669bd; stroke: none; font-size: 33px; font-style: italic; font-weight: 500; }
.district { fill: #7483ab; font-family: "Noto Sans", sans-serif; font-size: 36px; }
.big { font-size: 45px; }

.m-shield {
  fill: #fff;
  font: 700 30px Roboto, sans-serif;
}

.m-split {
  fill: #1a2ee8;
  font: 27px "Liberation Sans", sans-serif;
}

.m-flag {
  font: 700 33px "Liberation Sans", sans-serif;
}

.map__zoom {
  position: absolute;
  top: 14px;
  left: 10px;
  display: grid;
  width: 23px;
  background: #fff;
  box-shadow: 0 1px 3px rgba(0, 0, 0, 0.4);
}

.map__zoom button {
  display: grid;
  place-items: center;
  height: 23px;
}

.map__zoom button + button {
  border-top: 1px solid #ddd;
}

.map__layers {
  position: absolute;
  top: 14px;
  right: 10px;
  display: grid;
  place-items: center;
  width: 36px;
  height: 36px;
  background: #fff;
  box-shadow: 0 1px 3px rgba(0, 0, 0, 0.3);
}

.map__credit {
  position: absolute;
  right: 0;
  bottom: 18px;
  padding: 2px 5px;
  background: rgba(255, 255, 255, 0.5);
  color: #333;
  font: 12px/16px "Liberation Sans", sans-serif;
}

.grip {
  position: absolute;
  right: 5px;
  bottom: 5px;
}

.chart {
  position: relative;
  height: 342px;
  padding: 33px 9px 0 10px;
  border: 1px solid #a7b3cb;
  background: #ebecf1;
}

.chart__close {
  position: absolute;
  top: 5px;
  right: 5px;
  display: flex;
}

.chart__bar {
  display: flex;
  align-items: center;
  height: 22px;
}

.seg {
  display: flex;
  border: 1px solid #b9c4d8;
}

.seg__btn {
  width: 43px;
  height: 20px;
  background: linear-gradient(#f6f6f7, #e4e5e8);
  color: #a9b4c9;
}

.seg__btn + .seg__btn {
  border-left: 1px solid #b9c4d8;
}

.seg__btn--dark {
  background: linear-gradient(#888, #555);
  color: #fff;
}

.seg__btn--red {
  background: linear-gradient(#f19a98, #f0564e 45%, #e8170b);
  color: #fff;
}

.seg__btn--green {
  width: 53px;
  background: linear-gradient(#0cab0c 50%, #118511);
  color: #fff;
}

.slider {
  appearance: none;
  width: 137px;
  height: 22px;
  margin: 0 auto 6px 16px;
  background: none;
}

.slider::-webkit-slider-runnable-track {
  height: 7px;
  border: 1px solid #dcdce4;
  border-top: 1px solid #8c8c8c;
  border-left: 1px solid #8c8c8c;
  background: #fff;
}

.slider::-webkit-slider-thumb {
  appearance: none;
  width: 12px;
  height: 22px;
  margin-top: -8px;
  border: 1px solid #dcdde4;
  background: linear-gradient(#fff, #e4e4e6);
}

.chart__hist {
  display: grid;
  place-items: center;
  width: 44px;
  height: 22px;
  margin-right: 10px;
  background: #8fadf8;
}

.chart__plot {
  display: flex;
  height: 246px;
  margin-top: 15px;
}

.chart__svg {
  flex: 1;
  min-width: 0;
  height: 246px;
  border: solid #939393;
  border-width: 0 1px 1px;
  fill: none;
}

.chart__svg > * {
  vector-effect: non-scaling-stroke;
}

.ticks {
  display: flex;
  flex-direction: column;
  justify-content: space-between;
  font-size: 11px;
}

.ticks--pace {
  width: 37px;
  margin: 4px 0 -6px;
  color: #0a7d0a;
}

.ticks--pace li:last-child {
  padding-left: 19px;
}

.ticks--bpm {
  width: 56px;
  margin: 70px 0 -6px;
  padding-left: 6px;
  color: #e32412;
}

.chart__km {
  display: flex;
  margin: 3px 66px 0 91px;
  color: #2b2f3c;
  font-size: 9px;
}

.chart__km li {
  flex: 1;
  text-align: center;
}

/* right column */
.right {
  display: flex;
  min-height: 0;
  background: #f0f1f1;
}

.rail {
  flex: none;
  width: 12px;
}

.rail i, .hrail i {
  display: block;
  border-radius: 3px;
  background: #cbcbcb;
}

.rail i {
  width: 6px;
  margin: 3px 3px 0;
}

.rail--left i { height: 188px; }
.rail--stats i { height: 245px; }
.rail--laps i { height: 227px; }

.rail--outer {
  padding-bottom: 7px;
}

.rail--outer i {
  height: 100%;
}

.hrail {
  padding: 3px 17px 3px 3px;
}

.hrail i {
  height: 6px;
}

.panels {
  display: flex;
  flex: 1;
  flex-direction: column;
  min-width: 0;
}

.panel {
  display: flex;
  min-height: 0;
}

.panel__in {
  flex: 1;
  min-width: 0;
  overflow: hidden;
  background: #fff;
}

.panel--stats {
  flex: none;
  height: 343px;
}

.panel--laps {
  flex: 1;
  border-top: 1px solid #b9c6dc;
}

.panel__title {
  padding: 16px 0 4px;
  border-bottom: 1px solid #e8e8e8;
  box-shadow: 0 3px 5px -3px rgba(0, 0, 0, 0.15);
  font-size: 20px;
  line-height: 26px;
  font-weight: 200;
  text-align: center;
}

.totals {
  display: flex;
  justify-content: space-between;
  margin: 19px 38px 16px 30px;
  text-align: center;
}

.totals dd {
  font-size: 25px;
  line-height: 23px;
  font-weight: 200;
}

.totals small {
  margin-left: 5px;
  font-size: 14px;
  font-weight: 400;
}

table {
  width: 100%;
  border-collapse: collapse;
  table-layout: fixed;
}

th, td {
  padding: 0;
  font-weight: 400;
}

.c80 { width: 80px; }
.c68 { width: 69px; }

.metrics th, .ranges tbody th {
  padding-right: 11px;
  font-size: 11px;
  text-align: right;
}

.metrics td {
  height: 21px;
  padding-left: 9px;
  border-left: 1px solid #b9c6d6;
  font-size: 11px;
  white-space: nowrap;
}

.metrics td small {
  font-size: 10px;
}

.metrics td .tiny {
  font-size: 7px;
}

hr {
  margin: 18px 10px;
  border: 0;
  border-top: 1px solid #b9c6d6;
}

.ranges {
  text-align: center;
}

.ranges thead th {
  padding-bottom: 4px;
  font-size: 11px;
}

.ranges tbody td {
  height: 25px;
}

.ranges tbody th + td, .ranges .unit {
  border-left: 1px solid #b9c6d6;
}

.ranges tbody td {
  font-size: 12px;
}

.ranges tbody .unit {
  padding-left: 8px;
  font-size: 10px;
  text-align: left;
}

.ranges tbody tr:last-child > * {
  padding-bottom: 7px;
}

.ranges tbody tr:last-child td {
  height: 32px;
}

.tabs {
  display: flex;
  justify-content: space-between;
  padding: 15px 10px 0 35px;
}

.tab {
  display: grid;
  place-items: center;
  width: 36px;
  height: 36px;
  border-radius: 4px;
}

.tab--on {
  background: #ededed;
}

.laps__title {
  padding: 7px 0 13px 24px;
  font-size: 16px;
  line-height: 22px;
  font-weight: 400;
  text-align: center;
}

.lap {
  display: flex;
  align-items: center;
  height: 28px;
  padding-left: 10px;
}

.lap:nth-child(odd) {
  height: 27px;
}

.lap:first-child {
  height: 25px;
  margin-bottom: 4px;
  padding-bottom: 4px;
  border-bottom: 1px solid #b9c6dc;
}

.lap__name {
  width: 143px;
  margin-left: 9px;
  padding-top: 5px;
}

.lap__time {
  padding-top: 4px;
  font-size: 14px;
}

/* footer */
.foot {
  display: flex;
  flex: none;
  align-items: center;
  height: 56px;
  padding: 1px 16px 0 22px;
  border-top: 1px solid #dcdfe6;
  background: #fff;
}

.foot__public {
  display: flex;
  align-items: center;
  gap: 4px;
  margin-top: 11px;
}

.share {
  display: flex;
  gap: 5px;
  margin: 9px 0 0 6px;
}

.share a {
  display: grid;
  place-items: center;
  width: 21px;
  height: 21px;
}

.share__tw { background: #8ccdf2; }
.share__fb { background: #97aecb; }
.share__link { background: #8fc8d0; }
.share__mail { background: #9be3c6; }

.foot__actions {
  display: flex;
  align-items: center;
  gap: 38px;
  margin-left: auto;
  font-size: 14px;
}

.link {
  color: #1641ec;
}

.primary {
  height: 32px;
  margin-left: -15px;
  padding: 0 15px;
  border-radius: 4px;
  background: #1641ec;
  color: #fff;
}
</style>
